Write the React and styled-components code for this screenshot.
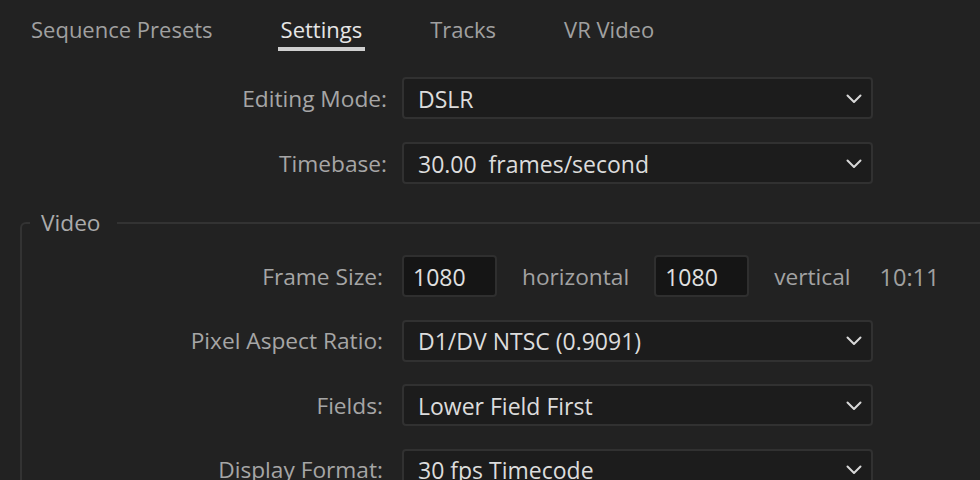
import React from "react";
import styled, { createGlobalStyle } from "styled-components";

const Global = createGlobalStyle`
  html, body {
    margin: 0;
    padding: 0;
    background: #222222;
    overflow: hidden;
  }
  body {
    font-family: "Open Sans", "Noto Sans", sans-serif;
    font-size: 22px;
    line-height: 30px;
    color: #a6a6a6;
  }
`;

const Page = styled.div`
  width: 980px;
  height: 480px;
  background: #222222;
  overflow: hidden;
`;

const TabBar = styled.div`
  display: flex;
  gap: 62px;
  padding: 14px 0 0 28px;
`;

const Tab = styled.div`
  padding: 0 3px 3px;
  color: ${(p) => (p.$active ? "#e6e6e6" : "#a0a0a0")};
  border-bottom: 4px solid ${(p) => (p.$active ? "#cfcfcf" : "transparent")};
  white-space: nowrap;
`;

const Form = styled.div`
  display: flex;
  flex-direction: column;
  gap: 23px;
  margin-top: 26px;
`;

const Row = styled.div`
  display: grid;
  grid-template-columns: ${(p) => p.$labelWidth}px auto;
  column-gap: ${(p) => p.$gap}px;
  align-items: center;
  height: 42px;
`;

const Label = styled.div`
  text-align: right;
  color: #a6a6a6;
  font-size: 22.7px;
  white-space: nowrap;
  padding-top: 1px;
`;

const Select = styled.div`
  box-sizing: border-box;
  width: 471px;
  height: 42px;
  display: flex;
  align-items: center;
  justify-content: space-between;
  padding: 1px 9px 0 14px;
  background: #1c1c1c;
  border: 2px solid #313131;
  border-radius: 4px;
  color: #dcdcdc;
  font-size: 23px;
  white-space: pre;
`;

const Chevron = () => (
  <svg width="16" height="10" viewBox="0 0 16 10" fill="none">
    <polyline
      points="1.5,1.5 8,8 14.5,1.5"
      stroke="#d8d8d8"
      strokeWidth="2"
      strokeLinecap="round"
      strokeLinejoin="round"
    />
  </svg>
);

const Fieldset = styled.fieldset`
  margin: 24px 0 0 20px;
  padding: 17px 0 0 0;
  border: 2px solid #333333;
  border-right: none;
  border-bottom: none;
  border-top-left-radius: 6px;
  min-width: 0;
`;

const Legend = styled.legend`
  margin-left: 8px;
  padding: 0 16px 0 11px;
  color: #ababab;
  font-size: 22.7px;
  line-height: 30px;
`;

const VideoRows = styled.div`
  display: flex;
  flex-direction: column;
  gap: 22.5px;
`;

const Inline = styled.div`
  display: flex;
  align-items: center;
  gap: 25px;
`;

const NumberBox = styled.div`
  box-sizing: border-box;
  width: 95px;
  height: 42px;
  display: flex;
  align-items: center;
  padding: 1px 0 0 9px;
  background: #151515;
  border: 2px solid #2f2f2f;
  border-radius: 4px;
  color: #e0e0e0;
  font-size: 23px;
`;

const Unit = styled.span`
  color: #a3a3a3;
  font-size: 22.7px;
  white-space: nowrap;
  padding-top: 1px;
`;

const Ratio = styled(Unit)`
  margin-left: 4px;
  font-size: 23.5px;
  color: #a0a0a0;
`;

const Dropdown = ({ value }) => (
  <Select>
    <span>{value}</span>
    <Chevron />
  </Select>
);

export default function App() {
  return (
    <Page>
      <Global />
      <TabBar>
        <Tab>Sequence Presets</Tab>
        <Tab $active>Settings</Tab>
        <Tab>Tracks</Tab>
        <Tab>VR Video</Tab>
      </TabBar>
      <Form>
        <Row $labelWidth={387} $gap={15}>
          <Label>Editing Mode:</Label>
          <Dropdown value="DSLR" />
        </Row>
        <Row $labelWidth={387} $gap={15}>
          <Label>Timebase:</Label>
          <Dropdown value="30.00  frames/second" />
        </Row>
      </Form>
      <Fieldset>
        <Legend>Video</Legend>
        <VideoRows>
          <Row $labelWidth={361} $gap={19}>
            <Label>Frame Size:</Label>
            <Inline>
              <NumberBox>1080</NumberBox>
              <Unit>horizontal</Unit>
              <NumberBox>1080</NumberBox>
              <Unit>vertical</Unit>
              <Ratio>10:11</Ratio>
            </Inline>
          </Row>
          <Row $labelWidth={361} $gap={19}>
            <Label>Pixel Aspect Ratio:</Label>
            <Dropdown value="D1/DV NTSC (0.9091)" />
          </Row>
          <Row $labelWidth={361} $gap={19}>
            <Label>Fields:</Label>
            <Dropdown value="Lower Field First" />
          </Row>
          <Row $labelWidth={361} $gap={19}>
            <Label>Display Format:</Label>
            <Dropdown value="30 fps Timecode" />
          </Row>
        </VideoRows>
      </Fieldset>
    </Page>
  );
}
